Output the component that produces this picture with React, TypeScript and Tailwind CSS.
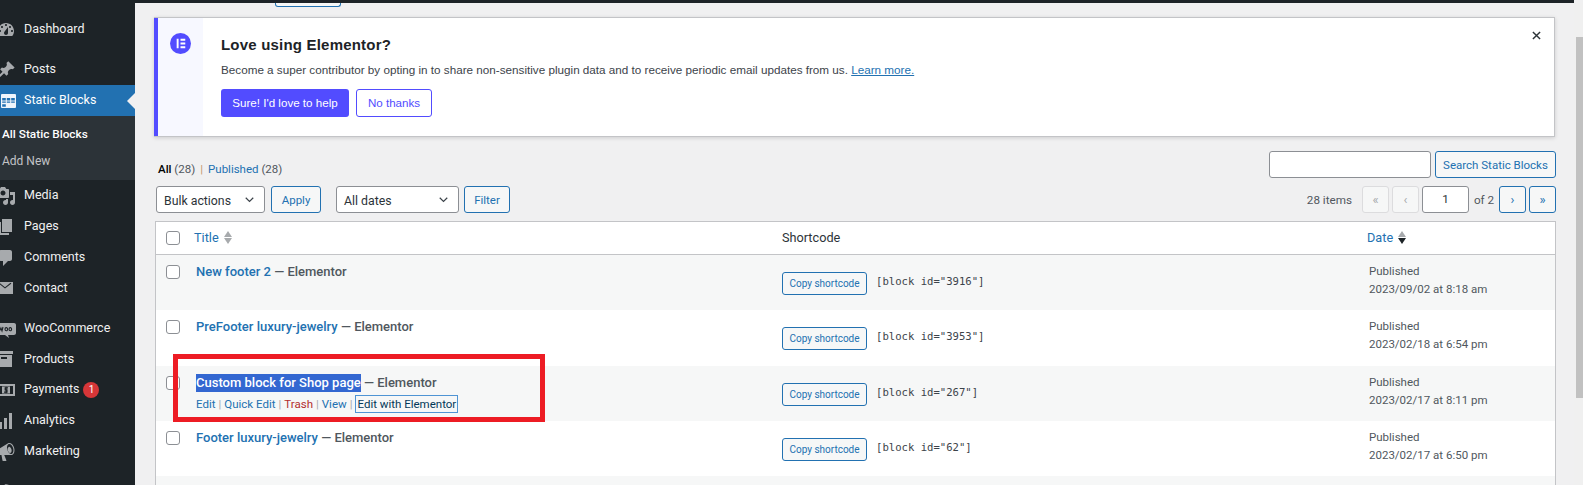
import type { ReactNode } from "react";

const seg = "font-['Roboto',sans-serif]";

function Dash({ d }: { d: string }) {
  return (
    <svg viewBox="0 0 20 20" className="h-5 w-5 shrink-0 fill-[#a7aaad]">
      <path d={d} />
    </svg>
  );
}

const icons = {
  dashboard:
    "M3.76 16h12.48c1.1-1.37 1.76-3.11 1.76-5 0-4.42-3.58-8-8-8s-8 3.58-8 8c0 1.89.66 3.63 1.76 5zM10 4c.55 0 1 .45 1 1s-.45 1-1 1-1-.45-1-1 .45-1 1-1zM6 6c.55 0 1 .45 1 1s-.45 1-1 1-1-.45-1-1 .45-1 1-1zm8 0c.55 0 1 .45 1 1s-.45 1-1 1-1-.45-1-1 .45-1 1-1zm-5.37 5.55L12 7v6c0 1.1-.9 2-2 2s-2-.9-2-2c0-.57.24-1.08.63-1.45zM4 10c.55 0 1 .45 1 1s-.45 1-1 1-1-.45-1-1 .45-1 1-1zm12 0c.55 0 1 .45 1 1s-.45 1-1 1-1-.45-1-1 .45-1 1-1z",
  posts:
    "M10.44 3.02l1.82-1.82 6.36 6.35-1.83 1.82c-1.05-.68-2.48-.57-3.41.36l-.75.75c-.92.93-1.04 2.35-.35 3.41l-1.83 1.82-2.41-2.41-2.8 2.79c-.42.42-3.38 2.71-3.8 2.29s1.86-3.39 2.28-3.81l2.79-2.79L4.1 9.36l1.83-1.82c1.05.69 2.48.57 3.4-.36l.75-.75c.93-.92 1.05-2.35.36-3.41z",
  media:
    "M13 11V4c0-.55-.45-1-1-1h-1.67L9 1H5L3.67 3H2c-.55 0-1 .45-1 1v7c0 .55.45 1 1 1h10c.55 0 1-.45 1-1zM7 4.5c1.38 0 2.5 1.12 2.5 2.5S8.38 9.5 7 9.5 4.5 8.38 4.5 7 5.62 4.5 7 4.5zM14 6h5v10.5c0 1.38-1.12 2.5-2.5 2.5S14 17.88 14 16.5s1.12-2.5 2.5-2.5c.17 0 .34.02.5.05V9h-3V6zm-4 8.05V13h2v3.5c0 1.38-1.12 2.5-2.5 2.5S7 17.88 7 16.5 8.12 14 9.5 14c.17 0 .34.02.5.05z",
  pagesStack: "M6 15V2h10v13H6zm-1 1h8v2H3V5h2v11z",
  comments:
    "M5 2h9c1.1 0 2 .9 2 2v7c0 1.1-.9 2-2 2h-2l-5 5v-5H5c-1.1 0-2-.9-2-2V4c0-1.1.9-2 2-2z",
  contact:
    "M1 4h16v12H1V4zm1.6 1.4L9 10.6l6.4-5.2-.9-.6L9 9.2 3.5 4.8l-.9.6z",
  products: "M17 5H-1V2h18v3zm-1 1H0v12h16V6zm-5 2v2H5V8h6z",
  analytics: "M16 18V2h-3v16h3zm-5 0V7H8v11h3zm-5 0v-7H1v7h5z",
  marketing:
    "M18.15 5.94c.46 1.62.38 3.22-.02 4.48-.42 1.28-1.26 2.18-2.3 2.48-.16.06-.26.06-.4.06-.06.02-.12.02-.18.02-.06.02-.14.02-.22.02h-6.8l2.22 5.5c.02.14-.06.26-.14.34-.08.1-.24.16-.34.16H6.95c-.1 0-.26-.06-.34-.16-.08-.08-.16-.2-.14-.34l-1-5.5H4.25l-.02-.02c-.5.06-1.08-.18-1.54-.62s-.88-1.08-1.06-1.88c-.24-.8-.2-1.56-.02-2.2.18-.62.58-1.08 1.06-1.3l.02-.02 9-5.4c.1-.06.18-.1.24-.16.06-.04.14-.08.24-.12.16-.08.28-.12.5-.18 1.04-.3 2.24.1 3.22.98.98.86 1.84 2.22 2.26 3.86zm-2.58 5.98h-.02c.4-.1.74-.34 1.04-.7.58-.7.86-1.76.86-3.04-.02-.64-.1-1.3-.28-1.98-.34-1.36-1.02-2.5-1.78-3.24s-1.68-1.1-2.46-.88c-.82.22-1.4.96-1.7 2-.32 1.04-.28 2.36.06 3.72.38 1.36 1 2.5 1.8 3.24.78.74 1.62 1.1 2.48.88zm-2.54-7.08c.22-.04.42-.02.62.04.38.16.76.48 1.12 1s.64 1.14.78 1.84c.14.72.1 1.38-.1 1.96-.2.56-.5 1-.9 1.18-.08.04-.16.08-.24.08-.22.06-.44.02-.66-.06-.38-.18-.76-.48-1.12-1.02-.34-.5-.62-1.14-.78-1.84-.14-.72-.1-1.4.1-1.98.18-.58.5-.96.88-1.14.08-.04.16-.08.3-.06z",
  appearance:
    "M14.48 11.06L7.41 3.99l1.5-1.5c.5-.56 2.3-.47 3.51.32 1.21.8 1.43 1.28 2.91 2.1 1.18.64 2.45 1.26 4.45.85zm-.71.71L6.7 4.7 4.93 6.47c-.39.39-.39 1.02 0 1.41l1.06 1.06c.39.39.39 1.03 0 1.42-.6.6-1.43 1.11-2.21 1.69-.35.26-.7.53-1.01.84C1.43 13.23.4 15.5 1.41 16.5c.99 1 3.27-.03 4.6-1.36.31-.31.58-.66.85-1.02.56-.78 1.08-1.61 1.69-2.21.39-.39 1.02-.39 1.41 0l1.06 1.06c.39.39 1.02.39 1.41 0z",
};

function TableIcon() {
  return (
    <svg viewBox="0 0 20 20" className="h-5 w-5 shrink-0">
      <rect x="5" y="3" width="15" height="14" rx="1" className="fill-[#f0f6fc]" />
      <path
        className="fill-[#2271b1]"
        d="M6.2 7h3.6v2.6H6.2zM10.8 7h3.4v2.6h-3.4zM15.2 7h3.6v2.6h-3.6zM6.2 10.6h3.6v1.2H6.2zM6.2 13.2h3.6v2.6H6.2zM10.8 10.6h3.4v1.2h-3.4zM15.2 10.6h3.6v1.2h-3.6z"
      />
    </svg>
  );
}

function Woo() {
  return (
    <svg viewBox="0 0 20 20" className="h-5 w-5 shrink-0">
      <path className="fill-[#a7aaad]" d="M2 4h16c1.1 0 2 .9 2 2v8c0 1.1-.9 2-2 2h-6l1 3-4-3H2c-1.1 0-2-.9-2-2V6c0-1.1.9-2 2-2z" />
      <path className="fill-none stroke-[#1d2327]" strokeWidth="1.1" d="M2.5 8l1 4 1.4-3 1.1 3 1-4M9 10.2a1.3 1.6 0 1 0 2.6 0a1.3 1.6 0 1 0-2.6 0M13 10.2a1.3 1.6 0 1 0 2.6 0a1.3 1.6 0 1 0-2.6 0" />
    </svg>
  );
}

function Payments() {
  return (
    <svg viewBox="0 0 20 20" className="h-5 w-5 shrink-0">
      <path className="fill-[#a7aaad]" fillRule="evenodd" d="M1 4h18v12H1V4zm2 2v8h14V6H3z" />
      <rect x="6" y="6.5" width="8" height="7" className="fill-[#a7aaad]" />
      <path className="fill-none stroke-[#1d2327]" strokeWidth="1.2" d="M12 7.8H9.2v2.1h1.8v2.3H8M10.1 6.8v6.4" />
    </svg>
  );
}

function MenuRow({
  icon,
  label,
  className,
  children,
}: {
  icon: ReactNode;
  label: string;
  className?: string;
  children?: ReactNode;
}) {
  return (
    <div className={`flex shrink-0 items-center text-[12.5px] text-[#f0f0f1] ${className ?? "h-[31px]"}`}>
      <div className="ml-[-4px] w-[28px] shrink-0">{icon}</div>
      <span>{label}</span>
      {children}
    </div>
  );
}

function Sidebar() {
  return (
    <aside className={`flex h-[482px] w-[135px] shrink-0 flex-col overflow-hidden bg-[#1d2327] pt-[11px] ${seg}`}>
      <MenuRow icon={<Dash d={icons.dashboard} />} label="Dashboard" />
      <MenuRow className="mt-[9px] h-[31px]" icon={<Dash d={icons.posts} />} label="Posts" />
      <div className="relative flex h-[31px] shrink-0 items-center bg-[#2271b1] text-[12.5px] text-white">
        <div className="ml-[-4px] w-[28px] shrink-0">
          <TableIcon />
        </div>
        <span>Static Blocks</span>
        <div className="absolute right-0 top-[8px] h-0 w-0 border-y-[8px] border-r-[8px] border-y-transparent border-r-[#f0f0f1]" />
      </div>
      <div className="flex h-[64px] shrink-0 flex-col justify-center gap-[8px] bg-[#2c3338] pl-[2px] text-[12px]">
        <div className="text-[11.8px] font-medium text-white">All Static Blocks</div>
        <div className="text-[#c3c4c7]">Add New</div>
      </div>
      <MenuRow icon={<Dash d={icons.media} />} label="Media" />
      <MenuRow icon={<Dash d={icons.pagesStack} />} label="Pages" />
      <MenuRow icon={<Dash d={icons.comments} />} label="Comments" />
      <MenuRow className="h-[30px]" icon={<Dash d={icons.contact} />} label="Contact" />
      <MenuRow className="mt-[10px] h-[31px]" icon={<Woo />} label="WooCommerce" />
      <MenuRow className="h-[30px]" icon={<Dash d={icons.products} />} label="Products" />
      <MenuRow icon={<Payments />} label="Payments">
        <span className="ml-[4px] flex h-[16px] w-[16px] items-center justify-center rounded-full bg-[#d63638] text-[10px] text-white">
          1
        </span>
      </MenuRow>
      <MenuRow icon={<Dash d={icons.analytics} />} label="Analytics" />
      <MenuRow icon={<Dash d={icons.marketing} />} label="Marketing" />
      <div className="ml-[-4px] mt-[9px] flex h-[31px] shrink-0 items-center">
        <Dash d={icons.appearance} />
      </div>
    </aside>
  );
}

function WpButton({ children, className }: { children: ReactNode; className: string }) {
  return (
    <div
      className={`flex items-center justify-center whitespace-nowrap rounded-[3px] border border-[#2271b1] bg-[#f6f7f7] text-[#2271b1] ${className}`}
    >
      {children}
    </div>
  );
}

function WpSelect({ label, className }: { label: string; className: string }) {
  return (
    <div
      className={`flex h-[27px] items-center justify-between rounded-[3px] border border-[#8c8f94] bg-white pl-[7px] pr-[9px] text-[12.3px] text-[#2c3338] ${className}`}
    >
      <span className="pt-[3px]">{label}</span>
      <svg viewBox="0 0 12 8" className="h-[6px] w-[11px] fill-none stroke-[#3c434a] stroke-[1.6]">
        <path d="M1 1l5 5 5-5" />
      </svg>
    </div>
  );
}

function PageBtn({ children, off }: { children: string; off?: boolean }) {
  return (
    <div
      className={`flex h-[27px] w-[27px] items-center justify-center rounded-[3px] border text-[13px] ${
        off ? "border-[#dcdcde] bg-[#f6f7f7] text-[#a7aaad]" : "border-[#2271b1] bg-[#f6f7f7] text-[#2271b1]"
      }`}
    >
      {children}
    </div>
  );
}

function SortArrows({ active }: { active?: boolean }) {
  return (
    <div className="ml-[5px] flex flex-col gap-[1px]">
      <div className="h-0 w-0 border-x-[4px] border-b-[6px] border-x-transparent border-b-[#a7aaad]" />
      <div
        className={`h-0 w-0 border-x-[4px] border-t-[6px] border-x-transparent ${
          active ? "border-t-[#1d2327]" : "border-t-[#a7aaad]"
        }`}
      />
    </div>
  );
}

function Checkbox({ className }: { className?: string }) {
  return <div className={`h-[14px] w-[14px] shrink-0 rounded-[3px] border border-[#8c8f94] bg-white ${className ?? ""}`} />;
}

function Row({
  title,
  shortcode,
  time,
  odd,
  tall,
  highlighted,
}: {
  title: string;
  shortcode: string;
  time: string;
  odd: boolean;
  tall?: boolean;
  highlighted?: boolean;
}) {
  return (
    <div className={`flex ${tall ? "h-[56px]" : "h-[55px]"} ${odd ? "bg-[#f6f7f7]" : "bg-white"}`}>
      <Checkbox className="ml-[10px] mt-[10px]" />
      <div className="w-[602px] shrink-0 pl-[16px] pt-[7px] text-[13px] leading-[19px]">
        <div className="whitespace-nowrap">
          {highlighted ? (
            <span className="inline-block bg-[#3367d1] font-medium leading-[18px] text-white">{title}</span>
          ) : (
            <span className="font-medium text-[#2271b1]">{title}</span>
          )}
          <span className="font-medium text-[#50575e]"> — Elementor</span>
        </div>
        {highlighted && (
          <div className="mt-[3px] flex items-center whitespace-nowrap text-[11.5px] leading-[16px] text-[#a7aaad]">
            <span className="text-[#2271b1]">Edit</span>
            <span className="mx-[3px]">|</span>
            <span className="text-[#2271b1]">Quick Edit</span>
            <span className="mx-[3px]">|</span>
            <span className="text-[#b32d2e]">Trash</span>
            <span className="mx-[3px]">|</span>
            <span className="text-[#2271b1]">View</span>
            <span className="mx-[3px]">|</span>
            <span className="border border-[#4f94d4] px-[1px] text-[#043959]">Edit with Elementor</span>
          </div>
        )}
      </div>
      <div className="flex w-[587px] shrink-0 items-start pt-[17px]">
        <WpButton className="h-[23px] w-[85px] text-[10px]">Copy shortcode</WpButton>
        <code className="ml-[9px] mt-[2px] font-['DejaVu_Sans_Mono',monospace] text-[10.6px] text-[#3c434a]">{shortcode}</code>
      </div>
      <div className="whitespace-nowrap pt-[7px] text-[11.5px] leading-[18px] text-[#50575e]">
        <div>Published</div>
        <div>{time}</div>
      </div>
    </div>
  );
}

function Notice() {
  return (
    <div className="flex h-[120px] border border-l-0 border-[#c3c4c7] bg-white font-['Liberation_Sans',sans-serif] shadow-[0_1px_4px_rgba(0,0,0,0.15)]">
      <div className="w-[4px] bg-[#524cff]" />
      <div className="w-[45px] bg-[#f7f8ff] pl-[12px] pt-[15px]">
        <svg viewBox="0 0 22 22" className="h-[21px] w-[21px]">
          <circle cx="11" cy="11" r="11" className="fill-[#524cff]" />
          <path className="fill-white" d="M7 6h2v10H7zM11 6h5v2h-5zM11 10h5v2h-5zM11 14h5v2h-5z" />
        </svg>
      </div>
      <div className="relative flex-1 pl-[18px] pt-[16px]">
        <div className="text-[15px] font-bold leading-[22px] tracking-[0.2px] text-[#1d2327]">Love using Elementor?</div>
        <div className="mt-[5px] text-[11.7px] leading-[18px] text-[#3c434a]">
          Become a super contributor by opting in to share non-sensitive plugin data and to receive periodic email updates from us.{" "}
          <span className="text-[#2271b1] underline">Learn more.</span>
        </div>
        <div className="mt-[10px] flex gap-[7px] text-[11.6px]">
          <div className="flex h-[28px] w-[128px] items-center justify-center rounded-[3px] bg-[#524cff] font-medium text-white">
            Sure! I'd love to help
          </div>
          <div className="flex h-[28px] w-[76px] items-center justify-center rounded-[3px] border border-[#524cff] bg-white text-[#524cff]">
            No thanks
          </div>
        </div>
        <svg viewBox="0 0 10 10" className="absolute right-[13px] top-[13px] h-[9px] w-[9px] fill-none stroke-[#2c3338] stroke-[1.6]">
          <path d="M1 1l8 8M9 1l-8 8" />
        </svg>
      </div>
    </div>
  );
}

export default function App() {
  return (
    <div className={`relative flex h-[485px] w-[1583px] flex-col overflow-hidden bg-[#f0f0f1] ${seg}`}>
      <div className="flex h-[3px] shrink-0">
        <div className="w-[1574px] bg-[#1d2327]" />
      </div>
      <div className="flex min-h-0 flex-1">
        <Sidebar />
        <main className="w-[1439px] shrink-0 pl-[19px]">
          <div className="ml-[121px] h-[4px] w-[66px] rounded-b-[3px] border border-t-0 border-[#2271b1] bg-[#f6f7f7]" />
          <div className="mt-[10px] w-[1401px]">
            <Notice />
          </div>
          <div className="mt-[14px] flex h-[27px] w-[1402px] justify-between pl-[2px]">
            <div className="ml-[2px] flex items-center gap-[5px] self-end text-[11.5px] leading-[18px] text-[#50575e]">
              <span>
                <span className="font-medium text-black">All</span> (28)
              </span>
              <span className="text-[#c59a6d]">|</span>
              <span>
                <span className="text-[#2271b1]">Published</span> (28)
              </span>
            </div>
            <div className="flex gap-[4px]">
              <div className="h-[27px] w-[162px] rounded-[3px] border border-[#8c8f94] bg-white" />
              <WpButton className="h-[27px] w-[121px] pt-[2px] text-[11.5px]">Search Static Blocks</WpButton>
            </div>
          </div>
          <div className="mt-[8px] flex h-[27px] w-[1402px] items-center pl-[2px]">
            <WpSelect label="Bulk actions" className="w-[109px]" />
            <WpButton className="ml-[6px] h-[27px] w-[50px] pt-[2px] text-[11.5px]">Apply</WpButton>
            <WpSelect label="All dates" className="ml-[15px] w-[123px]" />
            <WpButton className="ml-[5px] h-[27px] w-[46px] pt-[2px] text-[11.5px]">Filter</WpButton>
            <div className="ml-auto flex items-center gap-[3px] text-[11.7px] text-[#50575e]">
              <span className="mr-[7px] pt-[2px]">28 items</span>
              <PageBtn off>«</PageBtn>
              <PageBtn off>‹</PageBtn>
              <div className="flex h-[27px] w-[47px] items-center justify-center rounded-[3px] border border-[#8c8f94] bg-white text-[#2c3338]">
                1
              </div>
              <span className="w-[24px] pt-[2px] text-center">of 2</span>
              <PageBtn>›</PageBtn>
              <PageBtn>»</PageBtn>
            </div>
          </div>
          <div className="ml-[1px] mt-[8px] w-[1401px] border border-b-0 border-[#c3c4c7] bg-white">
            <div className="flex h-[33px] items-center border-b border-[#c3c4c7] text-[12.7px]">
              <Checkbox className="ml-[10px]" />
              <div className="flex w-[602px] shrink-0 items-center pl-[14px] text-[#2271b1]">
                Title
                <SortArrows />
              </div>
              <div className="w-[585px] shrink-0 text-[#2c3338]">Shortcode</div>
              <div className="flex items-center text-[#2271b1]">
                Date
                <SortArrows active />
              </div>
            </div>
            <Row odd title="New footer 2" shortcode='[block id="3916"]' time="2023/09/02 at 8:18 am" />
            <Row odd={false} tall title="PreFooter luxury-jewelry" shortcode='[block id="3953"]' time="2023/02/18 at 6:54 pm" />
            <Row odd highlighted title="Custom block for Shop page" shortcode='[block id="267"]' time="2023/02/17 at 8:11 pm" />
            <Row odd={false} title="Footer luxury-jewelry" shortcode='[block id="62"]' time="2023/02/17 at 6:50 pm" />
            <div className="h-[20px] bg-[#f6f7f7]" />
          </div>
        </main>
        <div className="relative w-[9px] shrink-0 bg-[#f0f0f0]">
          <div className="absolute left-[2px] right-0 top-[34px] h-[361px] bg-[#c1c1c1]" />
        </div>
      </div>
      <div className="pointer-events-none absolute left-[173px] top-[354px] h-[68px] w-[372px] border-[5px] border-[#ed1c24]" />
    </div>
  );
}
